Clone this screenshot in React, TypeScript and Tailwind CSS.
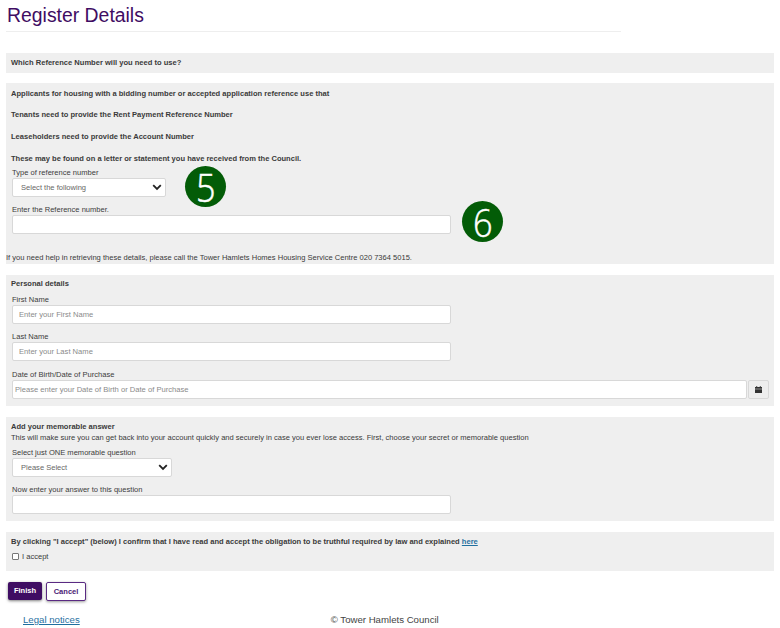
const labelCls = "block text-[7.55px] leading-[11px] text-[#3c3c3c]";
const inputCls =
  "block h-[19px] rounded-[2px] border border-[#d8d8d8] bg-white px-[6px] text-[7.6px] text-[#555] placeholder:text-[#8a8a8a] outline-none";

const Badge = ({ n, className }: { n: string; className: string }) => (
  <div
    className={`absolute flex h-[41px] w-[41px] items-center justify-center rounded-full bg-[#035c07] font-['Open_Sans',sans-serif] text-[38px] font-light leading-none text-white ${className}`}
  >
    <span className="scale-x-90 [-webkit-text-stroke:0.5px_white]">{n}</span>
  </div>
);

const FakeSelect = ({ text, width }: { text: string; width: string }) => (
  <div className={`flex h-[19px] items-center justify-between rounded-[2px] border border-[#d8d8d8] bg-white pl-[8px] pr-[3px] text-[7.55px] text-[#666] ${width}`}>
    <span>{text}</span>
    <svg width="10" height="7" viewBox="0 0 10 7" fill="none" stroke="#222" strokeWidth="1.8">
      <path d="M1.2 1.2 5 5l3.8-3.8" />
    </svg>
  </div>
);

export default function App() {
  return (
    <div className="relative h-[628px] w-[780px] overflow-hidden bg-white font-['Liberation_Sans',Arial,sans-serif] text-[#3a3a3a]">
      <div className="px-[6px]">
        <h1 className="h-[32px] w-[615px] border-b border-[#eeeeee] pt-[3px] pl-[1px] text-[19.4px] leading-[24px] text-[#3f0d63]">
          Register Details
        </h1>

        <section className="mt-[21px] flex h-[20px] items-center bg-[#efefef] px-[5px] text-[7.55px] font-bold">
          Which Reference Number will you need to use?
        </section>

        <section className="mt-[10px] h-[181px] bg-[#efefef] pt-[5px] text-[7.55px]">
          <div className="flex flex-col gap-[11px] px-[5px] font-bold leading-[11px]">
            <p>Applicants for housing with a bidding number or accepted application reference use that</p>
            <p className="-mt-[1px]">Tenants need to provide the Rent Payment Reference Number</p>
            <p>Leaseholders need to provide the Account Number</p>
            <p>These may be found on a letter or statement you have received from the Council.</p>
          </div>
          <div className="px-[6px] pt-[3px]">
            <label className={labelCls}>Type of reference number</label>
            <FakeSelect text="Select the following" width="w-[154px]" />
            <label className={`${labelCls} mt-[7px]`}>Enter the Reference number.</label>
            <input className={`${inputCls} w-[439px]`} />
          </div>
          <p className="mt-[18px] leading-[11px]">
            If you need help in retrieving these details, please call the Tower Hamlets Homes Housing Service Centre 020 7364 5015.
          </p>
        </section>

        <section className="mt-[11px] h-[131px] bg-[#efefef] pt-[3px]">
          <p className="px-[5px] text-[7.55px] font-bold leading-[11px]">Personal details</p>
          <div className="px-[6px] pt-[5px]">
            <label className={labelCls}>First Name</label>
            <input className={`${inputCls} w-[439px]`} placeholder="Enter your First Name" />
            <label className={`${labelCls} mt-[7px]`}>Last Name</label>
            <input className={`${inputCls} w-[439px]`} placeholder="Enter your Last Name" />
            <label className={`${labelCls} mt-[8px]`}>Date of Birth/Date of Purchase</label>
            <div className="flex gap-[1px]">
              <input
                className={`${inputCls} w-[735px] shrink-0 !px-[2px]`}
                placeholder="Please enter your Date of Birth or Date of Purchase"
              />
              <div className="flex h-[19px] w-[21px] shrink-0 items-center justify-center rounded-[2px] border border-[#d8d8d8] bg-[#eeeeee]">
                <svg width="7" height="7" viewBox="0 0 8 8" fill="#333">
                  <path d="M1.5 0h1v1h3V0h1v1H8v2H0V1h1.5zM0 3.6h8V8H0z" />
                </svg>
              </div>
            </div>
          </div>
        </section>

        <section className="mt-[11px] h-[104px] bg-[#efefef] pt-[4px] text-[7.55px]">
          <div className="px-[5px] leading-[11px]">
            <p className="font-bold">Add your memorable answer</p>
            <p>This will make sure you can get back into your account quickly and securely in case you ever lose access. First, choose your secret or memorable question</p>
          </div>
          <div className="px-[6px] pt-[4px]">
            <label className={labelCls}>Select just ONE memorable question</label>
            <FakeSelect text="Please Select" width="w-[160px]" />
            <label className={`${labelCls} mt-[7px]`}>Now enter your answer to this question</label>
            <input className={`${inputCls} w-[439px]`} />
          </div>
        </section>

        <section className="mt-[11px] h-[39px] bg-[#efefef] pt-[4px] text-[7.55px]">
          <p className="px-[5px] font-bold leading-[11px]">
            By clicking "I accept" (below) I confirm that I have read and accept the obligation to be truthful required by law and explained{" "}
            <a className="text-[#1f6f9f] underline">here</a>
          </p>
          <label className="mt-[4px] flex items-center gap-[3px] px-[6px] leading-[11px]">
            <span className="h-[7px] w-[7px] rounded-[1px] border border-[#777] bg-white" />
            I accept
          </label>
        </section>

        <div className="mt-[11px] flex gap-[4px] pl-[2px] text-[7.55px] font-bold">
          <button className="flex h-[18px] w-[34px] items-center justify-center rounded-[2px] bg-[#3f0d63] text-white shadow-[0_1px_3px_rgba(0,0,0,0.5)]">
            Finish
          </button>
          <button className="flex h-[19px] w-[40px] items-center justify-center rounded-[2px] border border-[#5a2a82] bg-white text-[#4b1a75] shadow-[0_1px_3px_rgba(0,0,0,0.4)]">
            Cancel
          </button>
        </div>

        <footer className="mt-[12px] flex text-[9.65px] leading-[14px] text-[#444]">
          <a className="ml-[17px] text-[#1f6f9f] underline">Legal notices</a>
          <span className="ml-[251px]">© Tower Hamlets Council</span>
        </footer>
      </div>

      <Badge n="5" className="left-[185px] top-[166px]" />
      <Badge n="6" className="left-[462px] top-[201px]" />
    </div>
  );
}
